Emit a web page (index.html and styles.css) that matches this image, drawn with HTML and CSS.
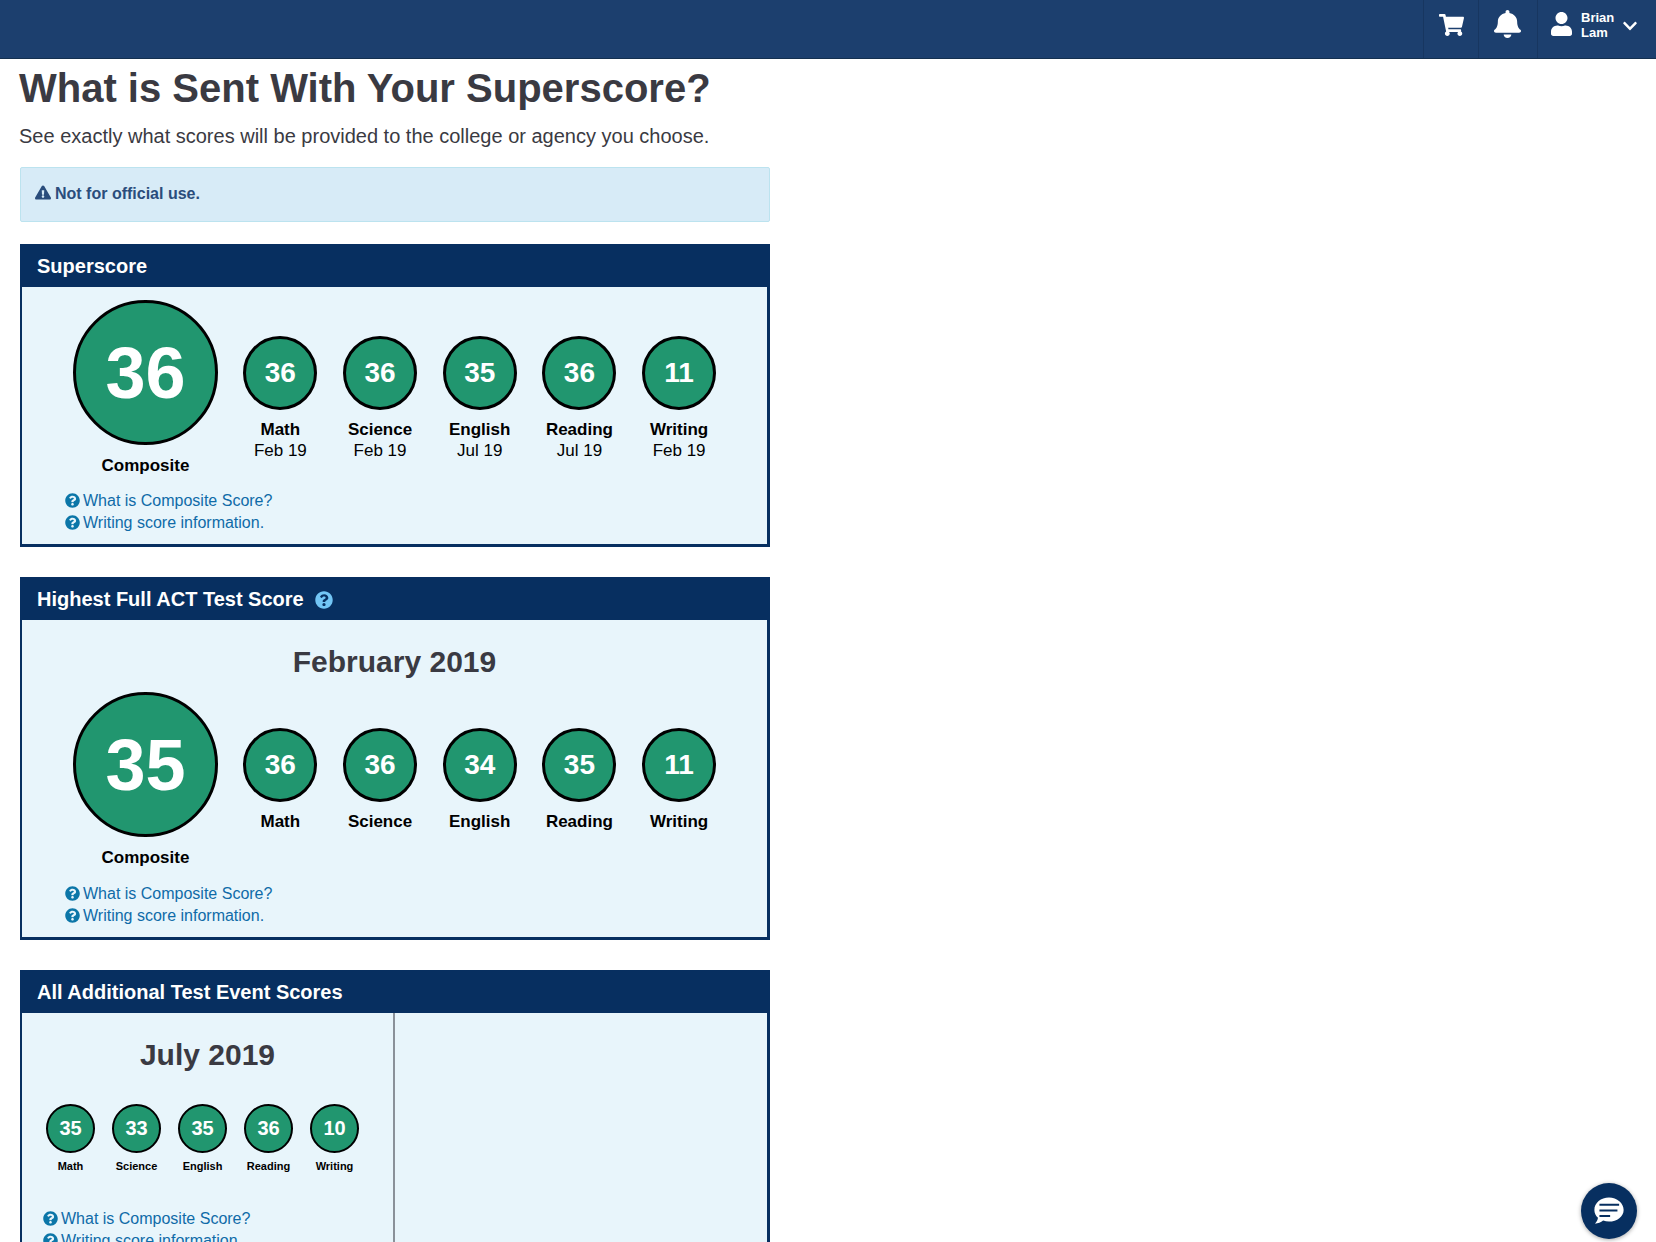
FILE: index.html
```html
<!DOCTYPE html>
<html lang="en">
<head>
<meta charset="utf-8">
<title>What is Sent With Your Superscore?</title>
<link rel="stylesheet" href="styles.css">
</head>
<body>
<svg class="defs" aria-hidden="true">
  <symbol id="i-q" viewBox="0 0 512 512"><path d="M504 256c0 136.997-111.043 248-248 248S8 392.997 8 256C8 119.083 119.043 8 256 8s248 111.083 248 248zM262.655 90c-54.497 0-89.255 22.957-116.549 63.758-3.536 5.286-2.353 12.415 2.715 16.258l34.699 26.31c5.205 3.947 12.621 3.008 16.665-2.122 17.864-22.658 30.113-35.797 57.303-35.797 20.429 0 45.698 13.148 45.698 32.958 0 14.976-12.363 22.667-32.534 33.976C247.128 238.528 216 254.941 216 296v4c0 6.627 5.373 12 12 12h56c6.627 0 12-5.373 12-12v-1.333c0-28.462 83.186-29.647 83.186-106.667 0-58.002-60.165-102-116.531-102zM256 338c-25.365 0-46 20.635-46 46 0 25.364 20.635 46 46 46s46-20.636 46-46c0-25.365-20.635-46-46-46z"/></symbol>
</svg>

<header class="topbar">
  <a class="tb-item tb-cart" aria-label="Cart">
    <svg class="ic-cart" viewBox="0 0 576 512" preserveAspectRatio="none"><path d="M528.12 301.319l47.273-208C578.806 78.301 567.391 64 551.99 64H159.208l-9.166-44.81C147.758 8.021 137.93 0 126.529 0H24C10.745 0 0 10.745 0 24v16c0 13.255 10.745 24 24 24h69.883l70.248 343.435C147.325 417.1 136 435.222 136 456c0 30.928 25.072 56 56 56s56-25.072 56-56c0-15.674-6.447-29.835-16.824-40h209.647C430.447 426.165 424 440.326 424 456c0 30.928 25.072 56 56 56s56-25.072 56-56c0-22.172-12.888-41.332-31.579-50.405l5.517-24.276c3.413-15.018-8.002-29.319-23.403-29.319H218.117l-6.545-32h293.145c11.206 0 20.92-7.754 23.403-18.681z"/></svg>
  </a>
  <a class="tb-item tb-bell" aria-label="Notifications">
    <svg class="ic-bell" viewBox="0 0 448 512" preserveAspectRatio="none"><path d="M224 512c35.32 0 63.97-28.65 63.97-64H160.03c0 35.35 28.65 64 63.97 64zm215.39-149.71c-19.32-20.76-55.47-51.99-55.47-154.29 0-77.7-54.48-139.9-127.94-155.16V32c0-17.67-14.32-32-31.98-32s-31.98 14.33-31.98 32v20.84C118.56 68.1 64.08 130.3 64.08 208c0 102.3-36.15 133.53-55.47 154.29-6 6.45-8.66 14.16-8.61 21.71.11 16.4 12.98 32 32.1 32h383.8c19.12 0 32-15.6 32.1-32 .05-7.55-2.61-15.27-8.61-21.71z"/></svg>
  </a>
  <a class="tb-item tb-user">
    <svg class="ic-user" viewBox="0 0 448 512"><path d="M224 256c70.7 0 128-57.3 128-128S294.7 0 224 0 96 57.3 96 128s57.3 128 128 128zm89.6 32h-16.7c-22.2 10.2-46.9 16-72.9 16s-50.6-5.8-72.9-16h-16.7C60.2 288 0 348.2 0 422.4V464c0 26.5 21.5 48 48 48h352c26.5 0 48-21.5 48-48v-41.6c0-74.2-60.2-134.4-134.4-134.4z"/></svg>
    <span class="user-name">Brian<br>Lam</span>
    <svg class="ic-chev" viewBox="0 0 448 512"><path d="M207.029 381.476L12.686 187.132c-9.373-9.373-9.373-24.569 0-33.941l22.667-22.667c9.357-9.357 24.522-9.375 33.901-.04L224 284.505l154.745-154.021c9.379-9.335 24.544-9.317 33.901.04l22.667 22.667c9.373 9.373 9.373 24.569 0 33.941L240.971 381.476c-9.373 9.372-24.569 9.372-33.942 0z"/></svg>
  </a>
</header>

<main class="content">
  <h1 class="page-title">What is Sent With Your Superscore?</h1>
  <p class="lead">See exactly what scores will be provided to the college or agency you choose.</p>

  <div class="alert">
    <svg class="ic-warn" viewBox="0 0 576 512"><path d="M569.517 440.013C587.975 472.007 564.806 512 527.94 512H48.054c-36.937 0-59.999-40.055-41.577-71.987L246.423 23.985c18.467-32.009 64.72-31.951 83.154 0l239.94 416.028zM288 354c-25.405 0-46 20.595-46 46s20.595 46 46 46 46-20.595 46-46-20.595-46-46-46zm-43.673-165.346l7.418 136c.347 6.364 5.609 11.346 11.982 11.346h48.546c6.373 0 11.635-4.982 11.982-11.346l7.418-136c.375-6.874-5.098-12.654-11.982-12.654h-63.383c-6.884 0-12.356 5.78-11.981 12.654z"/></svg>
    <strong>Not for official use.</strong>
  </div>

  <section class="panel">
    <h2 class="panel-head">Superscore</h2>
    <div class="panel-body">
      <div class="score-row">
        <div class="comp"><div class="circle circle-lg">36</div><div class="label">Composite</div></div>
        <div class="sub"><div class="circle circle-md">36</div><div class="label">Math</div><div class="date">Feb 19</div></div>
        <div class="sub"><div class="circle circle-md">36</div><div class="label">Science</div><div class="date">Feb 19</div></div>
        <div class="sub"><div class="circle circle-md">35</div><div class="label">English</div><div class="date">Jul 19</div></div>
        <div class="sub"><div class="circle circle-md">36</div><div class="label">Reading</div><div class="date">Jul 19</div></div>
        <div class="sub"><div class="circle circle-md">11</div><div class="label">Writing</div><div class="date">Feb 19</div></div>
      </div>
      <ul class="links">
        <li><svg class="ic-q"><use href="#i-q"/></svg><a>What is Composite Score?</a></li>
        <li><svg class="ic-q"><use href="#i-q"/></svg><a>Writing score information.</a></li>
      </ul>
    </div>
  </section>

  <section class="panel panel-full">
    <h2 class="panel-head">Highest Full ACT Test Score <svg class="ic-q-head"><use href="#i-q"/></svg></h2>
    <div class="panel-body">
      <h3 class="test-date">February 2019</h3>
      <div class="score-row">
        <div class="comp"><div class="circle circle-lg">35</div><div class="label">Composite</div></div>
        <div class="sub"><div class="circle circle-md">36</div><div class="label">Math</div></div>
        <div class="sub"><div class="circle circle-md">36</div><div class="label">Science</div></div>
        <div class="sub"><div class="circle circle-md">34</div><div class="label">English</div></div>
        <div class="sub"><div class="circle circle-md">35</div><div class="label">Reading</div></div>
        <div class="sub"><div class="circle circle-md">11</div><div class="label">Writing</div></div>
      </div>
      <ul class="links">
        <li><svg class="ic-q"><use href="#i-q"/></svg><a>What is Composite Score?</a></li>
        <li><svg class="ic-q"><use href="#i-q"/></svg><a>Writing score information.</a></li>
      </ul>
    </div>
  </section>

  <section class="panel panel-last">
    <h2 class="panel-head">All Additional Test Event Scores</h2>
    <div class="events">
      <div class="event">
        <h3 class="event-date">July 2019</h3>
        <div class="mini-row">
          <div class="mini"><div class="circle circle-sm">35</div><div class="mini-label">Math</div></div>
          <div class="mini"><div class="circle circle-sm">33</div><div class="mini-label">Science</div></div>
          <div class="mini"><div class="circle circle-sm">35</div><div class="mini-label">English</div></div>
          <div class="mini"><div class="circle circle-sm">36</div><div class="mini-label">Reading</div></div>
          <div class="mini"><div class="circle circle-sm">10</div><div class="mini-label">Writing</div></div>
        </div>
        <ul class="links links-event">
          <li><svg class="ic-q"><use href="#i-q"/></svg><a>What is Composite Score?</a></li>
          <li><svg class="ic-q"><use href="#i-q"/></svg><a>Writing score information.</a></li>
        </ul>
      </div>
      <div class="event-empty"></div>
    </div>
  </section>
</main>

<button class="chat" aria-label="Chat">
  <svg viewBox="0 -1 32 32"><path class="chat-bubble" d="M16 3C8.8 3 3 7.9 3 14c0 2.7 1.2 5.2 3.2 7.1-.3 2-1.3 3.8-2.6 5.2 2.6-.2 5.2-1.2 7.2-2.8 1.6.6 3.3.9 5.2.9 7.2 0 13-4.6 13-10.4S23.2 3 16 3z"/><path class="chat-line" d="M7.5 9.5H25M7.5 14.5h16M7.5 19.5H17"/></svg>
</button>
</body>
</html>
```

FILE: styles.css
```css
* { box-sizing: border-box; }
html, body { margin: 0; padding: 0; height: 100%; overflow: hidden; background: #fff; }
body { font-family: "Liberation Sans", Arial, sans-serif; color: #3a3a42; }
.defs { display: none; }
svg { fill: currentColor; display: block; }

.topbar {
  height: 59px;
  background: #1c3f6e;
  border-bottom: 1px solid #14304f;
  display: flex;
  justify-content: flex-end;
  color: #fff;
}
.tb-item { display: flex; align-items: center; border-left: 1px solid #173660; height: 58px; padding-bottom: 8px; }
.tb-cart { width: 55px; justify-content: center; }
.tb-bell { width: 59px; justify-content: center; padding-right: 2px; padding-bottom: 10px; }
.tb-user { width: 119px; padding-left: 13px; }
.ic-cart { width: 25px; height: 22px; }
.ic-bell { width: 27px; height: 28px; }
.ic-user { width: 21px; height: 24px; margin-top: -3px; }
.user-name { font-size: 13px; font-weight: 700; line-height: 15px; margin-left: 9px; width: 42px; }
.ic-chev { width: 14px; height: 16px; margin-top: 1px; }

.content { width: 770px; padding-left: 19px; }
.page-title { margin: 0; font-size: 40px; line-height: 50px; font-weight: 700; padding-top: 4px; }
.lead { margin: 9px 0 0; font-size: 20px; line-height: 28px; }

.alert {
  margin: 17px 0 0 1px;
  height: 55px;
  background: #d7ebf7;
  border: 1px solid #bce3ef;
  border-radius: 2px;
  padding: 16px 0 0 14px;
  display: flex;
  align-items: flex-start;
  gap: 4px;
  color: #2a4d7c;
  font-size: 16px;
  line-height: 20px;
}
.ic-warn { width: 16px; height: 15px; margin-top: 1px; }

.panel { margin: 22px 0 0 1px; border: 3px solid #072f60; border-left-width: 2px; border-top: 0; background: #e8f5fb; }
.panel + .panel { margin-top: 30px; }
.panel-head {
  margin: 0 -3px 0 -2px;
  height: 43px;
  padding: 2px 0 0 17px;
  background: #072f60;
  color: #fff;
  font-size: 20px;
  font-weight: 700;
  line-height: 41px;
  display: flex;
  align-items: center;
  white-space: pre;
}
.ic-q-head { width: 18px; height: 18px; margin-left: 6px; color: #72c5f5; }
.panel-body { padding: 13px 0 10px 0; }
.panel-full .links { margin-top: 15px; }

.test-date { margin: 11px 0 12px; font-size: 30px; line-height: 36px; font-weight: 700; text-align: center; }
.score-row { display: flex; align-items: flex-start; padding-left: 51px; }
.comp { width: 145px; text-align: center; margin-right: 12.5px; }
.sub { width: 99.7px; text-align: center; padding-top: 36px; color: #000; }
.sub .label { margin-top: 10px; }

.circle {
  display: flex;
  align-items: center;
  justify-content: center;
  margin: 0 auto;
  border-radius: 50%;
  border: 3px solid #000;
  background: #21966f;
  color: #fff;
  font-weight: 700;
}
.circle-lg { width: 145px; height: 145px; font-size: 72px; }
.circle-md { width: 74px; height: 74px; font-size: 28px; }
.circle-sm { width: 49px; height: 49px; font-size: 20px; border-width: 2px; }

.label { margin-top: 11px; font-size: 17px; line-height: 20px; font-weight: 700; color: #000; }
.date { font-size: 17px; line-height: 21px; color: #000; }

.links { list-style: none; margin: 14px 0 0; padding: 0 0 0 43px; font-size: 16px; line-height: 22px; color: #0f6ba8; }
.links li { display: flex; align-items: center; gap: 3px; }
.ic-q { width: 15px; height: 15px; color: #0b76a8; margin-top: -2px; }

.panel-last { height: 400px; }
.events { display: flex; }
.event { width: 373px; height: 357px; border-right: 2px solid #8a9199; padding-top: 24px; }
.event-empty { flex: 1; }
.event-date { margin: 0 0 31px; font-size: 30px; line-height: 36px; font-weight: 700; text-align: center; }
.mini-row { display: flex; padding-left: 15.5px; }
.mini { width: 66px; text-align: center; }
.mini-label { margin-top: 7px; font-size: 11px; line-height: 13px; font-weight: 700; color: #000; }
.links-event { margin-top: 35px; padding-left: 21px; }

.chat {
  position: fixed;
  right: 19px;
  bottom: 3px;
  width: 56px;
  height: 56px;
  padding: 10px;
  border: 0;
  border-radius: 50%;
  background: #072f60;
  box-shadow: 0 1px 4px rgba(0,0,0,.35);
}
.chat-bubble { fill: #fff; }
.chat-line { fill: none; stroke: #072f60; stroke-width: 1.8; }
```
